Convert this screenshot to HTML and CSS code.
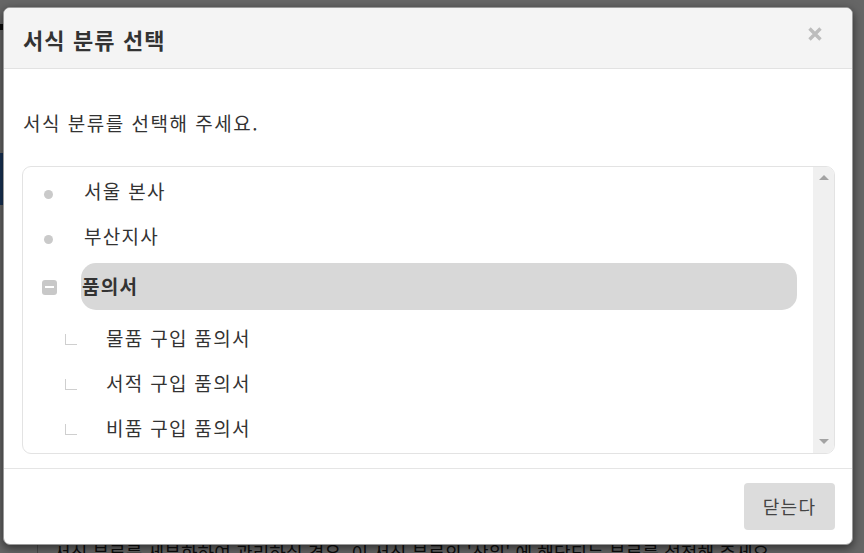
FILE: index.html
```html
<!DOCTYPE html>
<html lang="ko">
<head>
<meta charset="utf-8">
<title>서식 분류 선택</title>
<link rel="stylesheet" href="styles.css">
</head>
<body>
<div class="page">
  <div class="page-top"></div>
  <div class="page-side"></div>
  <div class="page-row">
    <div class="page-cell">서식 분류를 세분화하여 관리하실 경우, 이 서식 분류의 '상위' 에 해당되는 분류를 설정해 주세요.</div>
  </div>
</div>
<div class="backdrop"></div>
<div class="modal">
  <div class="modal-header">
    <h4 class="modal-title">서식 분류 선택</h4>
    <button class="close" type="button" aria-label="닫기">
      <svg width="16" height="16" viewBox="0 0 16 16"><path d="M2.5 2.5 L13.5 13.5 M13.5 2.5 L2.5 13.5" stroke="#bdbdbd" stroke-width="3.4" stroke-linecap="butt"/></svg>
    </button>
  </div>
  <div class="modal-body">
    <p class="desc">서식 분류를 선택해 주세요.</p>
    <div class="tree-box">
      <ul class="tree">
        <li class="node leaf"><span class="dot"></span><span class="label">서울 본사</span></li>
        <li class="node leaf"><span class="dot"></span><span class="label">부산지사</span></li>
        <li class="node open"><span class="minus"><span class="bar"></span></span><span class="label sel">품의서</span></li>
        <li class="node child"><span class="elbow"></span><span class="label">물품 구입 품의서</span></li>
        <li class="node child"><span class="elbow"></span><span class="label">서적 구입 품의서</span></li>
        <li class="node child"><span class="elbow"></span><span class="label">비품 구입 품의서</span></li>
      </ul>
      <div class="scrollbar">
        <span class="arrow up"></span>
        <span class="arrow down"></span>
      </div>
    </div>
  </div>
  <div class="modal-footer">
    <button class="btn" type="button">닫는다</button>
  </div>
</div>
</body>
</html>
```
FILE: styles.css
```css
* { box-sizing: border-box; }
html, body { margin: 0; padding: 0; }
body {
  width: 864px;
  height: 553px;
  overflow: hidden;
  background: #fff;
  font-family: "Noto Sans CJK KR", "Noto Sans", sans-serif;
  color: #333;
  position: relative;
}
.page { width: 864px; height: 553px; }
.page-top { height: 30px; border-bottom: 6px solid #222; width: 4px; }
.page-side { margin-top: 117px; width: 4px; height: 52px; background: #3f7fd6; transform: translateY(6px); }
.page-row { margin-top: 332px; margin-left: 37px; border-left: 1px solid #bbb; height: 40px; }
.page-cell { padding: 8px 0 0 16px; font-size: 18px; letter-spacing: 0.1px; color: #222; white-space: nowrap; }

.backdrop {
  position: absolute;
  inset: 0;
  background: rgba(0, 0, 0, 0.6);
}

.modal {
  position: absolute;
  left: 3px;
  top: 7px;
  width: 850px;
  height: 538px;
  background: #fff;
  border: 1px solid #9a9a9a;
  border-radius: 7px;
  box-shadow: 0 3px 10px rgba(0, 0, 0, 0.55);
  display: flex;
  flex-direction: column;
  overflow: hidden;
}
.modal-header {
  height: 61px;
  flex: none;
  background: #f4f4f4;
  border-bottom: 1px solid #e2e2e2;
  display: flex;
  align-items: center;
  justify-content: space-between;
  padding: 0 29px 0 19px;
}
.modal-title {
  margin: 0;
  font-size: 22px;
  letter-spacing: 1.1px;
  font-weight: 700;
  color: #333;
  line-height: 1;
  padding-top: 1px;
}
.close {
  border: 0;
  background: none;
  padding: 0;
  width: 16px;
  height: 16px;
  display: block;
  margin-top: -8px;
}
.close svg { display: block; }

.modal-body {
  flex: 1;
  padding: 41px 17px 14px 18px;
  border-bottom: 1px solid #e5e5e5;
}
.desc {
  margin: 0 0 30px 1px;
  font-size: 19px;
  letter-spacing: 1.5px;
  line-height: 26px;
  color: #333;
}
.tree-box {
  height: 288px;
  border: 1px solid #e3e3e3;
  border-radius: 9px;
  display: flex;
  overflow: hidden;
}
.tree {
  list-style: none;
  margin: 0;
  padding: 1px 16px 0 0;
  flex: 1;
}
.node {
  height: 45px;
  display: flex;
  align-items: center;
  font-size: 19px;
  letter-spacing: 1.3px;
  color: #333;
}
.dot {
  width: 9px;
  height: 9px;
  border-radius: 50%;
  background: #cacaca;
  margin: 8px 0 0 21px;
  flex: none;
}
.leaf .label { margin-left: 31px; }
.node.open {
  height: 47px;
  margin: 5px 0 5px;
}
.minus {
  width: 15px;
  height: 15px;
  border-radius: 3px;
  background: #c8c8c8;
  margin: 1px 0 0 19px;
  display: flex;
  align-items: center;
  justify-content: center;
  flex: none;
}
.minus .bar { width: 9px; height: 2px; background: #fff; }
.label.sel {
  flex: 1;
  height: 47px;
  margin-left: 24px;
  background: #d8d8d8;
  border-radius: 15px;
  font-weight: 700;
  display: flex;
  align-items: center;
  padding: 0 0 3px 1px;
}
.elbow {
  width: 12px;
  height: 11px;
  border-left: 1px solid #cfcfcf;
  border-bottom: 1px solid #cfcfcf;
  margin: 4px 0 0 42px;
  flex: none;
}
.child .label { margin-left: 29px; }

.scrollbar {
  width: 21px;
  flex: none;
  background: #f0f0f0;
  display: flex;
  flex-direction: column;
  justify-content: space-between;
  align-items: center;
  padding: 8px 0 9px;
}
.arrow {
  width: 0;
  height: 0;
  border-left: 5px solid transparent;
  border-right: 5px solid transparent;
}
.arrow.up { border-bottom: 5px solid #a3a3a3; }
.arrow.down { border-top: 5px solid #a3a3a3; }

.modal-footer {
  height: 76px;
  flex: none;
  display: flex;
  justify-content: flex-end;
  align-items: flex-start;
  padding: 14px 17px 0 0;
}
.btn {
  width: 91px;
  height: 47px;
  border: 0;
  border-radius: 4px;
  background: #dcdcdc;
  font-family: "Noto Sans CJK KR", "Noto Sans", sans-serif;
  font-size: 18px;
  letter-spacing: 1.2px;
  color: #444;
  padding: 0 0 2px;
}
```
